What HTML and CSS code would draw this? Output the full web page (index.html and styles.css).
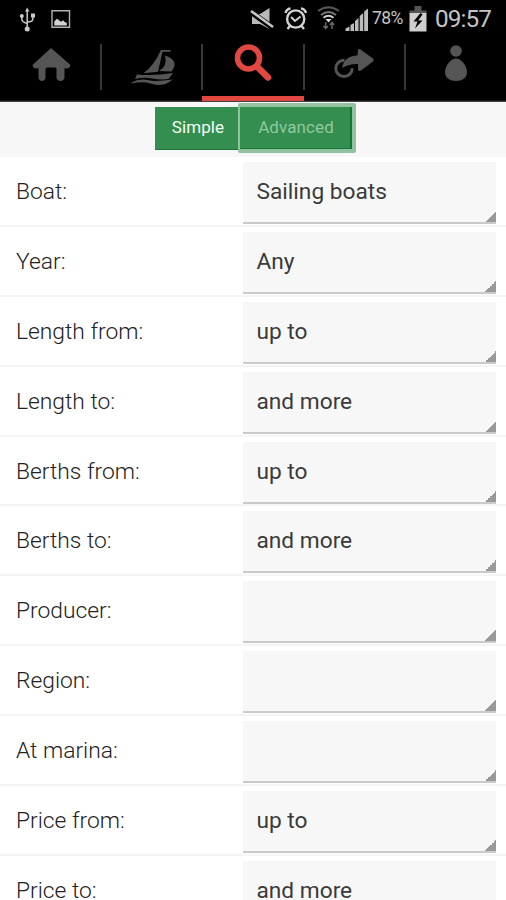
FILE: index.html
```html
<!DOCTYPE html>
<html lang="en">
<head>
<meta charset="utf-8">
<title>Boat search</title>
<link rel="stylesheet" href="styles.css">
</head>
<body>
<header class="status">
  <div class="status-left">
    <svg width="16" height="26" viewBox="19 5 16 26" fill="#c9c9c9" stroke="#c9c9c9">
      <path d="M27.2 9V27M21.800 15v3q0 3 5.400 4.500M32.800 14v4q0 3-5.600 3" fill="none" stroke-width="1.500"/>
      <path d="M25 10.500l2.200-4 2.200 4z" stroke="none"/><circle cx="27.200" cy="28" r="2.500" stroke="none"/><circle cx="21.800" cy="15" r="2" stroke="none"/><path d="M31 12.500h4v4h-4z" stroke="none"/>
    </svg>
    <svg width="20" height="20" viewBox="51 8 20 20">
      <path d="M52 9.800h17.500v16.400H52z" fill="none" stroke="#b2b2b2" stroke-width="1.400"/>
      <path d="M54.300 24.500v-4l2.500-2.700 2.200 1.500 2 1.500 2-1.500 2 2 1.800.5v2.700z" fill="#d2d2d2"/>
    </svg>
  </div>
  <div class="status-right">
    <svg width="124" height="32" viewBox="248 2 124 32">
      <path d="M252 13h8l9.500-6v21l-9.500-5h-8z" fill="#b9b9b9"/><path d="M250 10.500l24 17" stroke="#000" stroke-width="5.500"/><path d="M251 10l22 16" stroke="#c8c8c8" stroke-width="2.600"/>
      <g fill="none" stroke="#d2d2d2"><circle cx="295.700" cy="18" r="8.600" stroke-width="2.400"/><path d="M291 16l4 4 5.500-4.500" stroke-width="2"/><path d="M285.500 12q1-4 5-4.500M301 7.500q4 .5 5 4.500M290 25l-2.500 3M301.500 25l2.500 3" stroke-width="2.400"/></g>
      <g fill="none" stroke-width="2"><path d="M318 10q10.500-7.500 21 0" stroke="#555"/><path d="M321 14q7.500-6 15 0" stroke="#777"/><path d="M323.500 16.800q5-4 10 0" stroke="#ccc"/><path d="M325.500 18h6l-3 3.500z" fill="#ddd" stroke="none"/><path d="M325.700 21v6M323.500 25l2.200 2.500 2.200-2.500M332 28v-6M329.800 24l2.200-2.500 2.200 2.500" stroke="#666" stroke-width="1.500"/></g>
      <g fill="#bdbdbd"><path d="M345.500 30v-2.500l4-2V30zM350.500 30v-6l3.500-2v8zM355 30V20l3.500-3v13zM359.700 30V15l3.500-3v18zM364.200 30V10.500l3.800-3V30z"/></g>
    </svg>
    <span class="percent">78%</span>
    <svg class="battery" width="20" height="28" viewBox="408 4 20 28"><path d="M409.500 12V9.500h5V5h7v4.500h5V12z" fill="#555"/><path d="M409.500 12h17v18.500h-17z" fill="#cfcfcf"/><path d="M420.500 12l-7 8.500h4l-2.500 7 7.500-8h-4.200l4.200-6z" fill="#000"/></svg>
    <span class="clock">09:57</span>
  </div>
</header>
<nav class="tabs">
  <a class="tab"><svg viewBox="0 37 101 65"><path d="M51 48L70.500 65q-1.500 5-6 3V78q-1 3-4 3t-4-3V69q0-1.500-1.500-1.500h-8q-1.500 0-1.500 1.500v9q-1 3-3.500 3t-3.500-3V68q-5 2-6-3z" fill="#555"/></svg></a>
  <a class="tab"><svg viewBox="101 37 101 65" fill="#555"><path d="M161 50h9.500v1.800h-8l-4.500 20-14.500 1.500q10-7 17.500-23.300z"/><path d="M165 55.500q15 5 6.500 16l-12.500-.5q9-5 6-15.500z"/><path d="M137 74.500q18 1.500 36-1.500l-4.500 6q-7 1-16-.5t-17.500.5z"/><path d="M131.500 82.500q8-4.500 16-2.500t25-.5q-3 3-7 4.500-8 2-15-.5t-19 0z"/></svg></a>
  <a class="tab active"><svg viewBox="202 37 101 65"><circle cx="248.500" cy="58" r="11" fill="none" stroke="#e34742" stroke-width="5.600"/><path d="M257 66.500l11 11" stroke="#e34742" stroke-width="6.500" stroke-linecap="round"/></svg></a>
  <a class="tab"><svg viewBox="304 37 101 65"><path d="M344.500 60.200a8.200 8.200 0 1 0 7.700 8" fill="none" stroke="#555" stroke-width="3"/><path d="M358 49.500q1-1 2.500 0l12.500 9q1.500 1.500 0 3l-12 9q-3 1.500-3-1.500v-5q-8-.5-16 4 2-12 15.500-12.500z" fill="#555"/></svg></a>
  <a class="tab"><svg viewBox="405 37 101 65" fill="#555"><circle cx="456" cy="51" r="5.800"/><path d="M456 58.500c5.500 0 11 8 11 13.500 0 6-5 9-11 9s-11-3-11-9c0-5.500 5.500-13.500 11-13.500z"/></svg></a>
</nav>
<div class="modes">
  <div class="mode-group"><button class="mode">Simple</button><button class="mode advanced">Advanced</button></div>
</div>
<main class="form">
  <div class="row"><span class="label">Boat:</span><div class="select">Sailing boats</div></div>
  <div class="row"><span class="label">Year:</span><div class="select">Any</div></div>
  <div class="row"><span class="label">Length from:</span><div class="select">up to</div></div>
  <div class="row"><span class="label">Length to:</span><div class="select">and more</div></div>
  <div class="row"><span class="label">Berths from:</span><div class="select">up to</div></div>
  <div class="row"><span class="label">Berths to:</span><div class="select">and more</div></div>
  <div class="row"><span class="label">Producer:</span><div class="select"></div></div>
  <div class="row"><span class="label">Region:</span><div class="select"></div></div>
  <div class="row"><span class="label">At marina:</span><div class="select"></div></div>
  <div class="row"><span class="label">Price from:</span><div class="select">up to</div></div>
  <div class="row"><span class="label">Price to:</span><div class="select">and more</div></div>
</main>
</body>
</html>
```
FILE: styles.css
```css
* { box-sizing: border-box; }
body {
  margin: 0;
  height: 900px;
  overflow: hidden;
  background: #fff;
  color: #3a3a3a;
  font-family: Roboto, "Liberation Sans", sans-serif;
}
svg { display: block; flex: none; }
.status {
  height: 37px;
  padding: 0 14px 0 19px;
  display: flex;
  justify-content: space-between;
  background: #000;
  color: #c4c4c4;
}
.status-left, .status-right { display: flex; align-items: center; }
.status-left { gap: 16px; }
.percent { width: 36px; font-size: 17.5px; letter-spacing: -0.6px; line-height: 37px; }
.clock { width: 57px; margin-left: 7px; font-size: 24.3px; letter-spacing: -0.9px; line-height: 37px; white-space: nowrap; }
.tabs {
  height: 65px;
  display: flex;
  background: linear-gradient(#000 63px, #555 65px);
}
.tab { flex: 1; position: relative; }
.tab svg { width: 101px; height: 65px; }
.tab + .tab::before {
  content: "";
  position: absolute;
  left: -1px;
  top: 7px;
  width: 2px;
  height: 46px;
  background: #383838;
}
.active { background: linear-gradient(transparent 59px, #e34742 59px, #e34742 64px, transparent 64px); }
.modes {
  height: 55px;
  padding: 1px 0 0 155px;
  background: #f7f7f7;
}
.mode-group { display: flex; align-items: center; }
.mode {
  width: 83px;
  height: 43px;
  padding: 0 0 2px 3px;
  border: 0;
  border-bottom: 1px solid #1d773c;
  background: #348e50;
  color: #f4fff6;
  font: 17px Roboto, sans-serif;
  letter-spacing: 0.1px;
}
.advanced {
  width: 118px;
  height: 50px;
  padding: 0 0 3px;
  border: 4px solid #93c2a1;
  border-left-width: 2px;
  border-radius: 2px;
  box-shadow: inset -2px -1px #167538;
  color: #8fc99f;
}
.row {
  height: 69.9px;
  padding: 5px 10px 0 16px;
  display: flex;
  border-bottom: 2px solid #f5f5f5;
}
.label { width: 227px; font-size: 22.8px; font-weight: 300; line-height: 59.5px; color: #222; }
.select {
  flex: 1;
  height: 62px;
  padding-left: 13.500px;
  border-bottom: 2px solid #cacaca;
  background: linear-gradient(135deg, transparent 50%, #999 50%) right bottom / 11px 11px no-repeat, #f7f7f7;
  font-size: 22.7px;
  line-height: 60.500px;
}
```
